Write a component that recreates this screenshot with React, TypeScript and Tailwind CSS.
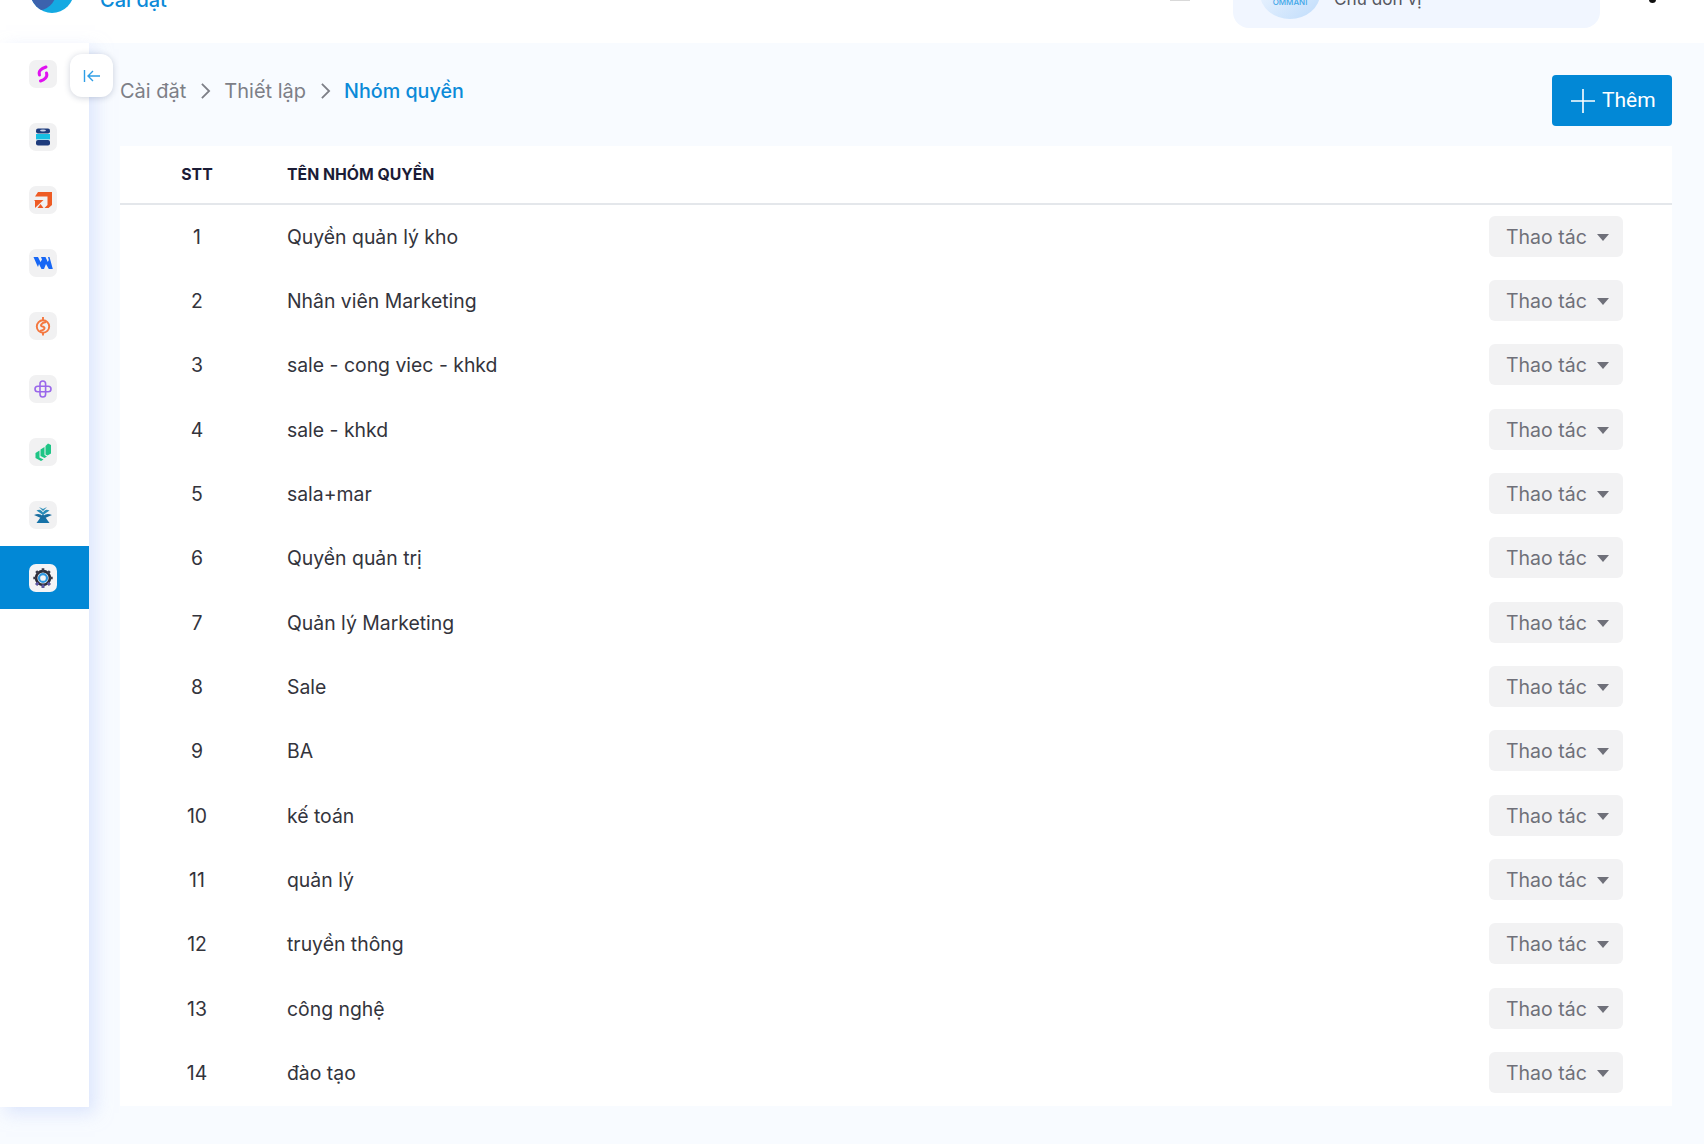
import type { ReactNode } from "react";

const groups = [
  "Quyền quản lý kho",
  "Nhân viên Marketing",
  "sale - cong viec - khkd",
  "sale - khkd",
  "sala+mar",
  "Quyền quản trị",
  "Quản lý Marketing",
  "Sale",
  "BA",
  "kế toán",
  "quản lý",
  "truyền thông",
  "công nghệ",
  "đào tạo",
];

const sidebarIcons: ReactNode[] = [
  <svg key="sync" viewBox="0 0 20 20" className="h-5 w-5" fill="none" stroke="#e011f0" strokeWidth="3" strokeLinecap="round">
    <path d="M13 3 C8.5 4.5 5 7 6.5 11" />
    <path d="M7.5 17 C11.5 15.5 15 13 13.5 9" />
  </svg>,
  <svg key="db" viewBox="0 0 20 20" className="h-5 w-5">
    <rect x="3" y="1.5" width="14" height="5" rx="2" fill="#1d3b7c" />
    <ellipse cx="10" cy="3.4" rx="3" ry="1" fill="#c9d4ea" />
    <rect x="3" y="7" width="14" height="5.4" fill="#17bfe3" />
    <rect x="3" y="13" width="14" height="5.5" rx="2" fill="#1d3b7c" />
  </svg>,
  <svg key="arrow" viewBox="0 0 20 20" className="h-5 w-5">
    <path d="M5 2 H19 V15 L15.5 18 H11.5 L14.5 15 V6.5 H2 Z" fill="#ee5b24" />
    <path d="M1 10 H10.5 L2 18 V11 Z" fill="#ee5b24" />
    <path d="M7.5 14 L10.5 18 H4.5 Z" fill="#ee5b24" />
  </svg>,
  <svg key="wave" viewBox="0 0 20 20" className="h-5 w-5">
    <path d="M0.5 4 H5 L7.5 9 L9 6.5 L8 4 H12.5 L14.8 9 L15.8 7 L15 4 H16.5 L19.8 16 H15.8 L13 11 L11 16 H8.5 L6 11 L5 14 L4 12 Z" fill="#1767f5" />
  </svg>,
  <svg key="swirl" viewBox="0 0 20 20" className="h-5 w-5" fill="none" stroke="#f4773f" strokeWidth="1.9">
    <circle cx="10" cy="10.5" r="6.2" />
    <path d="M13 6 C8 7 6.5 10 9.5 10.5 C13 11 12 14 7 15" />
    <path d="M10 1 L10 4.3 M10 16.7 L10 19.5" />
  </svg>,
  <svg key="cross" viewBox="0 0 20 20" className="h-5 w-5" fill="none" stroke="#9a67ea" strokeWidth="1.6">
    <rect x="7" y="2" width="5.6" height="16" rx="2.8" />
    <rect x="2" y="7.2" width="16" height="5.6" rx="2.8" />
  </svg>,
  <svg key="stack" viewBox="0 0 20 20" className="h-5 w-5" fill="#1fc586">
    <path d="M2.5 11 L6.5 8.5 V15.5 L10.5 17.5 L8 19 L2.5 16 Z" />
    <path d="M7.5 7.5 L11.5 5 V13 L14 14.5 L11.5 16 L7.5 14 Z" />
    <path d="M12.5 4 L15 1.5 L18 3 V11.5 L14.5 13.5 L12.5 12.5 Z" />
  </svg>,
  <svg key="tree" viewBox="0 0 20 20" className="h-5 w-5" fill="#1572a8">
    <path d="M10 9 L16.5 18 H3.5 Z" />
    <path d="M1 10 C5 8.5 7 8.5 10 11.5 C13 8.5 15 8.5 19 10 L15.5 11.5 L10 14 L4.5 11.5 Z" fill="#1a6d9f" />
    <path d="M3.5 5.5 C7 4 8 5 10 7.5 C12 5 13 4 16.5 5.5 L10 10 Z" fill="#2a8cb8" />
    <path d="M6 2 L10 4 L14 2 L10 6 Z" fill="#2a8cb8" />
  </svg>,
  <svg key="gear" viewBox="0 0 20 20" className="h-[22px] w-[22px]" fill="none">
    <circle cx="10" cy="10" r="6.3" stroke="#2b2b36" strokeWidth="2.4" />
    <path d="M10 1.2 V4 M10 16 V18.8 M1.2 10 H4 M16 10 H18.8 M3.8 3.8 L5.7 5.7 M14.3 14.3 L16.2 16.2 M3.8 16.2 L5.7 14.3 M14.3 5.7 L16.2 3.8" stroke="#3a3a4a" strokeWidth="2.4" />
    <path d="M14.3 14.3 L16.2 16.2 M10 16 V18.8 M3.8 16.2 L5.7 14.3" stroke="#5a55a8" strokeWidth="2.4" />
    <circle cx="10" cy="10" r="3.6" stroke="#2f97e0" strokeWidth="2" />
  </svg>,
];

function Chevron() {
  return (
    <svg viewBox="0 0 12 20" className="mx-[13.5px] h-[18px] w-[11px]" fill="none" stroke="#7d7f87" strokeWidth="2">
      <path d="M2 2 L10 10 L2 18" />
    </svg>
  );
}

export default function App() {
  return (
    <div className="min-h-[1144px] bg-[#f8fbff] font-['Inter','Noto_Sans',sans-serif] text-[#33343c]">
      <header className="flex h-[43px] overflow-hidden bg-white">
        <div className="relative ml-[30px] -mt-[31px] h-[44px] w-[44px] shrink-0 overflow-hidden rounded-[50%] bg-[#14a9e2]">
          <div className="absolute -left-[14px] top-[5px] h-[37px] w-[40px] rounded-[50%] bg-[#3c62ad]" />
        </div>
        <div className="ml-[26px] -mt-[14px] w-[67px] shrink-0 whitespace-nowrap text-[20px] font-medium leading-[28px] text-[#0b8ad8]">
          Cài đặt
        </div>
        <div className="ml-[1003px] -mt-[1px] h-[2px] w-[20px] shrink-0 bg-[#d9d9d9]" />
        <div className="ml-[43px] -mt-[32px] flex h-[60px] w-[367px] shrink-0 rounded-[16px] bg-[#f1f6ff] pl-[27px]">
          <div className="flex h-[51px] w-[60px] items-end justify-center rounded-[50%] bg-gradient-to-br from-[#f6f9ff] to-[#bfdcfb] pb-[12px] text-[8px] font-medium leading-[10px] text-[#3ea6e8]">
            OMMANI
          </div>
          <div className="ml-[14px] mt-[19px] text-[17.2px] leading-[24px] text-[#555760]">Chủ đơn vị</div>
        </div>
        <div className="ml-[49px] -mt-[4px] h-[7px] w-[7px] shrink-0 rounded-full bg-[#111]" />
      </header>

      <div className="flex">
        <aside className="relative h-[1064px] w-[89px] shrink-0 bg-white shadow-[6px_6px_16px_rgba(196,212,250,0.55)]">
          <div className="-mt-px flex flex-col">
            {sidebarIcons.map((icon, index) => (
              <div
                key={index}
                className={
                  index === 8
                    ? "flex h-[63px] items-center bg-[#0288d6] pl-[29px]"
                    : "flex h-[63px] items-center pl-[29px]"
                }
              >
                <span
                  className={
                    index === 8
                      ? "flex h-[28px] w-[28px] items-center justify-center rounded-[7px] bg-[#f4f4f6]"
                      : "flex h-[28px] w-[28px] items-center justify-center rounded-[7px] bg-[#f1f1f2]"
                  }
                >
                  {icon}
                </span>
              </div>
            ))}
          </div>
          <button
            type="button"
            className="absolute left-[70px] top-[11px] flex h-[43px] w-[43px] items-center justify-center rounded-[12px] bg-white shadow-[0_1px_6px_rgba(30,50,90,0.22)]"
          >
            <svg viewBox="0 0 18 14" className="h-[14px] w-[18px]" fill="none" stroke="#2e9ee6" strokeWidth="1.4">
              <path d="M1.5 1 V13 M17 7 H5 M10 2 L5 7 L10 12" />
            </svg>
          </button>
        </aside>

        <main className="min-w-0 flex-1 pl-[31px] pr-[32px]">
          <div className="flex h-[103px] items-start justify-between">
            <nav className="mt-[31.5px] flex items-center text-[20px] leading-[32px] text-[#7d7f87]">
              <span>Cài đặt</span>
              <Chevron />
              <span>Thiết lập</span>
              <Chevron />
              <span className="text-[19.7px] font-medium text-[#0b8ad8]">Nhóm quyền</span>
            </nav>
            <button
              type="button"
              className="mt-[32px] flex h-[51px] w-[120px] items-center gap-[7px] rounded-[4px] bg-[#0288d6] pl-[19px] pt-px font-['Roboto',sans-serif] text-[21px] text-white"
            >
              <svg viewBox="0 0 24 24" className="h-[24px] w-[24px]" fill="none" stroke="#ffffff" strokeWidth="1.6" aria-hidden="true">
                <path d="M12 0 V24 M0 12 H24" />
              </svg>
              Thêm
            </button>
          </div>

          <section className="bg-white">
            <div className="flex h-[59px] items-center border-b-2 border-[#e4e7eb] text-[15.8px] font-bold text-[#1b1c36]">
              <div className="w-[154px] text-center">STT</div>
              <div className="pl-[13px]">TÊN NHÓM QUYỀN</div>
            </div>
            {groups.map((name, index) => (
              <div key={name} className="flex h-[64.35px] items-center text-[19.4px]">
                <div className="w-[154px] text-center">{index + 1}</div>
                <div className="flex-1 pl-[13px]">{name}</div>
                <button
                  type="button"
                  className="-mt-[2px] mr-[49px] flex h-[41px] w-[134px] items-center rounded-[6px] bg-[#f2f2f3] pl-[17px] pt-[2px] text-[19.5px] text-[#6f7079]"
                >
                  Thao tác
                  <span className="ml-[10px] h-0 w-0 border-x-[6px] border-t-[7px] border-x-transparent border-t-[#6f7079]" />
                </button>
              </div>
            ))}
          </section>
        </main>
      </div>
    </div>
  );
}
